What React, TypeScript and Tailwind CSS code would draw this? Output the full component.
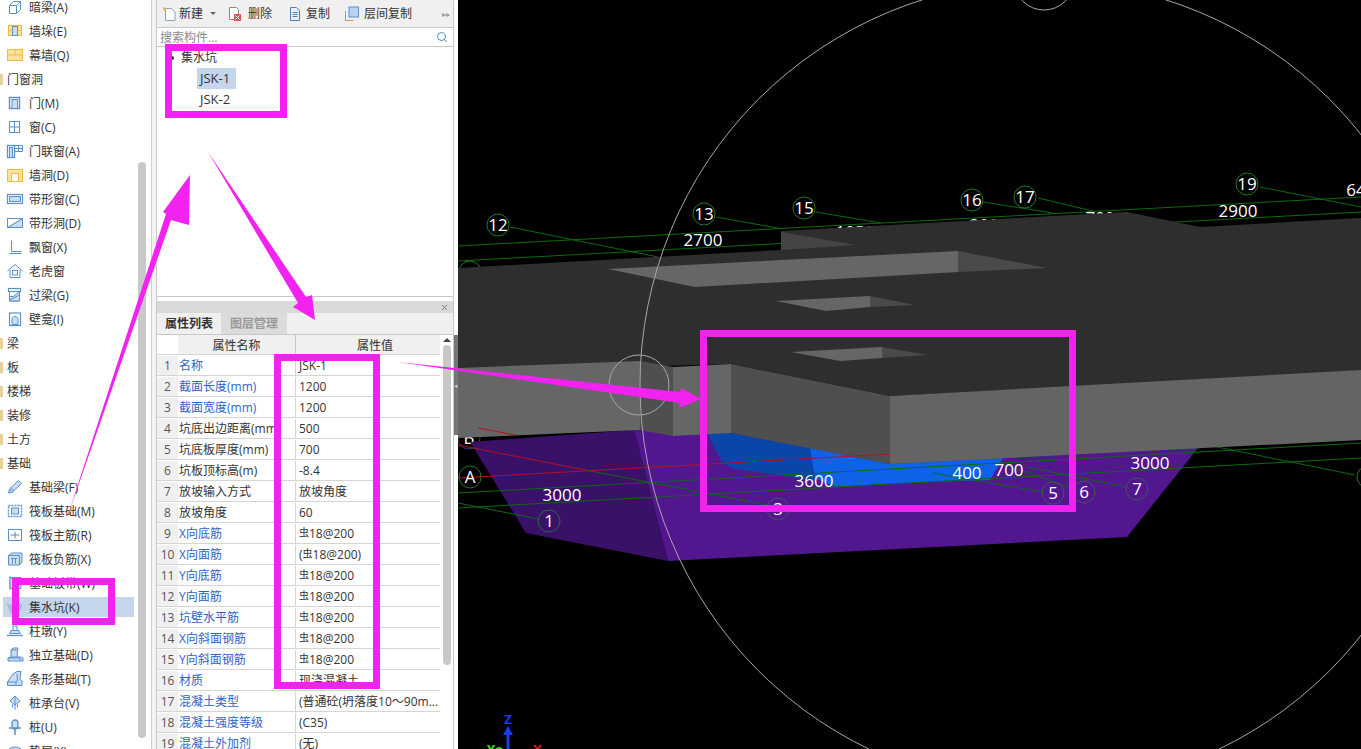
import type { ReactNode } from 'react'
import { Search, X } from 'lucide-react'

const BLUE = '#5b8fc7'
const LIGHT = '#c9def5'
const YEL = '#f5b942'
const YFILL = '#fde29b'

// 左侧构件树的小图标
const icons: Record<string, ReactNode> = {
  am: (
    <g fill="none" stroke={BLUE}>
      <path d="M3.5 7.5l4-4h7v8l-4 4h-7z" />
      <path d="M3.5 7.5h7v8M10.5 7.5l4-4" />
    </g>
  ),
  duo: (
    <g stroke={YEL}>
      <rect x="2.5" y="3.5" width="13" height="10" fill={YFILL} />
      <rect x="6.5" y="4.5" width="5" height="9" fill={LIGHT} stroke={BLUE} />
      <path d="M2.5 8.5h4M11.5 8.5h4" />
    </g>
  ),
  mq: (
    <g fill={YFILL} stroke={YEL}>
      <rect x="1.5" y="3.5" width="15" height="11" />
      <path d="M1.5 9h15M9 3.5V9" fill="none" />
    </g>
  ),
  men: (
    <g fill="none" stroke={BLUE}>
      <rect x="3.5" y="3.5" width="10" height="11" strokeWidth="1.4" />
      <rect x="6" y="5.5" width="5.5" height="9" fill={LIGHT} />
    </g>
  ),
  chuang: (
    <g fill="none" stroke={BLUE}>
      <rect x="3.5" y="3.5" width="10" height="11" />
      <path d="M3.5 9h10M8.5 3.5v11" />
    </g>
  ),
  mlc: (
    <g fill="none" stroke={BLUE}>
      <rect x="1.5" y="3.5" width="7" height="12" strokeWidth="1.3" />
      <rect x="3.5" y="5.5" width="3" height="10" fill={LIGHT} />
      <path d="M8.5 3.5h8v6h-8M12.5 3.5v6M8.5 6.5h8" />
    </g>
  ),
  qd: (
    <g stroke={YEL}>
      <rect x="1.5" y="3.5" width="15" height="12" fill={YFILL} />
      <rect x="5.5" y="7.5" width="7" height="8" fill="#fff" />
    </g>
  ),
  dxc: (
    <g stroke={BLUE}>
      <rect x="1.5" y="4.5" width="15" height="9" fill="none" strokeWidth="1.2" />
      <rect x="3.5" y="6.5" width="11" height="5" fill={LIGHT} />
    </g>
  ),
  dxd: (
    <g stroke={BLUE}>
      <path d="M1.5 4.5h15v9h-15z" fill={LIGHT} />
      <path d="M1.5 13.5l15-9" fill="none" />
      <path d="M1.5 4.5h15v0L1.5 13.5z" fill="#fff" />
    </g>
  ),
  pc: <path d="M5.5 2.5v11h10M3.5 15.5h12" fill="none" stroke={BLUE} />,
  lhc: (
    <g fill="none" stroke={BLUE}>
      <path d="M1.5 9L9 2.5 16.5 9M4 8v7.5h10V8" />
      <rect x="6.5" y="8.5" width="5" height="4.5" />
    </g>
  ),
  gl: (
    <g stroke={BLUE}>
      <rect x="3.5" y="5.5" width="10" height="9.5" fill={LIGHT} />
      <path d="M3.5 14l10-5v6h-10z" fill={LIGHT} />
      <path d="M3.5 10.5l4 0 6-5h-10z" fill="#fff" />
      <rect x="2.5" y="2.5" width="12" height="3" fill="#fff" strokeWidth="1.2" />
    </g>
  ),
  bk: (
    <g stroke={BLUE} fill="none">
      <rect x="3.5" y="3" width="11" height="12.5" strokeWidth="1.2" />
      <path d="M6 14.5V8.5q3-4.5 6 0v6z" fill={LIGHT} />
    </g>
  ),
  jcl: (
    <g stroke={BLUE} fill={LIGHT}>
      <path d="M2.5 15l1-4 9-8.5 3 3-9 8.5z" />
      <path d="M3.5 11l3 3.5M5 9.5l3 3.5" fill="none" />
    </g>
  ),
  fb: (
    <g fill="none" stroke={BLUE}>
      <rect x="2.5" y="3.5" width="13" height="11" strokeWidth="1.4" strokeDasharray="2 1" />
      <rect x="5.5" y="6" width="7" height="6" fill={LIGHT} />
    </g>
  ),
  fbz: (
    <g fill="none" stroke={BLUE}>
      <rect x="2.5" y="3.5" width="13" height="11" />
      <path d="M4.5 9h9M9 5.5v7" />
    </g>
  ),
  fbf: (
    <g fill="none" stroke={BLUE}>
      <path d="M2.5 5.5l3-2.5h10.500v9l-2.500 3h-11z" fill={LIGHT} />
      <path d="M2.500 5.500h11v9.500M5 8.500h6M6.500 8.500v5M9.500 8.500v5" />
    </g>
  ),
  jcbd: (
    <g fill="none" stroke={BLUE}>
      <path d="M4 2.500v13" strokeDasharray="2 1" strokeWidth="1.400" />
      <path d="M4 3.500h11v11H4z" fill={LIGHT} />
    </g>
  ),
  jsk: (
    <g fill="none" stroke="#8fa5bd">
      <path d="M1.500 6l3.500 8h2L4 6M16 6l-3.500 8h-2L14 6" />
      <path d="M9 3v7M6.500 8L9 11l2.500-3" />
    </g>
  ),
  zd: (
    <g fill="none" stroke={BLUE}>
      <rect x="7" y="4" width="4" height="4.500" />
      <path d="M5 8.500h8l1.500 3h-11z" fill={LIGHT} />
      <path d="M1 13.500h16" strokeWidth="1.300" />
    </g>
  ),
  dl: (
    <g fill="none" stroke={BLUE}>
      <path d="M2 15v-3l3-1V4l2-2h5l-1 9h4l2 1v3z" fill={LIGHT} />
      <path d="M5 4h6M2 12h12v3M5 11h6" />
    </g>
  ),
  tx: (
    <g fill="none" stroke={BLUE}>
      <path d="M1.500 15.500V12L7 4l4-2.500h4l-1 7 2 3v4z" fill={LIGHT} />
      <path d="M1.500 12H10l1.500-2L11 4M10 12v3.500" />
    </g>
  ),
  czt: (
    <g fill="none" stroke={BLUE}>
      <path d="M9 2l5 5-5 4-5-4z" fill={LIGHT} />
      <path d="M9 2v14M6.500 10.500v3M11.500 10.500v3" />
    </g>
  ),
  z: (
    <g stroke={BLUE} fill={LIGHT}>
      <rect x="6" y="2" width="6" height="9" rx="3" strokeWidth="1.300" />
      <path d="M3 10h12M9 11v6" fill="none" strokeWidth="1.500" />
    </g>
  ),
  dc: <ellipse cx="9" cy="10" rx="7.500" ry="5" fill={LIGHT} stroke={BLUE} />,
}

type TreeRow = { label: string; icon?: string; selected?: boolean }

const treeRows: TreeRow[] = [
  { label: '暗梁(A)', icon: 'am' },
  { label: '墙垛(E)', icon: 'duo' },
  { label: '幕墙(Q)', icon: 'mq' },
  { label: '门窗洞' },
  { label: '门(M)', icon: 'men' },
  { label: '窗(C)', icon: 'chuang' },
  { label: '门联窗(A)', icon: 'mlc' },
  { label: '墙洞(D)', icon: 'qd' },
  { label: '带形窗(C)', icon: 'dxc' },
  { label: '带形洞(D)', icon: 'dxd' },
  { label: '飘窗(X)', icon: 'pc' },
  { label: '老虎窗', icon: 'lhc' },
  { label: '过梁(G)', icon: 'gl' },
  { label: '壁龛(I)', icon: 'bk' },
  { label: '梁' },
  { label: '板' },
  { label: '楼梯' },
  { label: '装修' },
  { label: '土方' },
  { label: '基础' },
  { label: '基础梁(F)', icon: 'jcl' },
  { label: '筏板基础(M)', icon: 'fb' },
  { label: '筏板主筋(R)', icon: 'fbz' },
  { label: '筏板负筋(X)', icon: 'fbf' },
  { label: '基础板带(W)', icon: 'jcbd' },
  { label: '集水坑(K)', icon: 'jsk', selected: true },
  { label: '柱墩(Y)', icon: 'zd' },
  { label: '独立基础(D)', icon: 'dl' },
  { label: '条形基础(T)', icon: 'tx' },
  { label: '桩承台(V)', icon: 'czt' },
  { label: '桩(U)', icon: 'z' },
  { label: '垫层(X)', icon: 'dc' },
]

const REBAR = '虫18@200'

const props: { name: string; value: string; blue?: boolean }[] = [
  { name: '名称', value: 'JSK-1', blue: true },
  { name: '截面长度(mm)', value: '1200', blue: true },
  { name: '截面宽度(mm)', value: '1200', blue: true },
  { name: '坑底出边距离(mm)', value: '500' },
  { name: '坑底板厚度(mm)', value: '700' },
  { name: '坑板顶标高(m)', value: '-8.4' },
  { name: '放坡输入方式', value: '放坡角度' },
  { name: '放坡角度', value: '60' },
  { name: 'X向底筋', value: REBAR, blue: true },
  { name: 'X向面筋', value: `(${REBAR})`, blue: true },
  { name: 'Y向底筋', value: REBAR, blue: true },
  { name: 'Y向面筋', value: REBAR, blue: true },
  { name: '坑壁水平筋', value: REBAR, blue: true },
  { name: 'X向斜面钢筋', value: REBAR, blue: true },
  { name: 'Y向斜面钢筋', value: REBAR, blue: true },
  { name: '材质', value: '现浇混凝土', blue: true },
  { name: '混凝土类型', value: '(普通砼(坍落度10～90m...', blue: true },
  { name: '混凝土强度等级', value: '(C35)', blue: true },
  { name: '混凝土外加剂', value: '(无)', blue: true },
]

function RebarValue({ value }: { value: string }) {
  if (!value.includes('虫')) return <>{value}</>
  const [before, after] = value.split('虫')
  return (
    <>
      {before}
      <span className="text-[10px] align-[2px]">虫</span>
      {after}
    </>
  )
}

function Sidebar() {
  return (
    <div className="flex w-[152px] shrink-0 border-r border-[#cfcfcf] bg-white">
      <div className="w-[138px] shrink-0 -mt-[5px]">
        {treeRows.map((row) => (
          <div key={row.label} className="flex h-6 items-center">
            {row.icon ? (
              <div
                className={`ml-[3px] flex h-5 w-[131px] items-center ${row.selected ? 'bg-[#c5d6ec]' : ''}`}
              >
                <svg viewBox="0 0 18 18" className="ml-[3px] h-[18px] w-[18px] shrink-0">
                  {icons[row.icon]}
                </svg>
                <span className="ml-[5px] pt-[2px] text-[12px] text-[#333]">{row.label}</span>
              </div>
            ) : (
              <>
                <div className="h-[11px] w-[3px] bg-[#e9cf98]" />
                <span className="ml-1 pt-[2px] text-[12px] text-[#333]">{row.label}</span>
              </>
            )}
          </div>
        ))}
      </div>
      <div className="w-2 shrink-0">
        <div className="mt-[162px] h-[576px] rounded bg-[#c8c8c8]" />
      </div>
    </div>
  )
}

function Toolbar() {
  return (
    <div className="flex h-7 shrink-0 items-center border-b border-[#c8c8c8] bg-[#f0f0f0] text-[12px] text-[#333]">
      <svg viewBox="0 0 16 16" className="ml-[5px] h-4 w-4 shrink-0">
        <path d="M3.500 2.500h6l3.500 3.500v8.500h-9.500z" fill="#fff" stroke="#8ca3ba" />
        <path d="M1 1l3 1-1 3-2-1z" fill="#f3b94a" />
      </svg>
      <span className="ml-[1px]">新建</span>
      <span className="ml-[7px] h-0 w-0 border-x-[3px] border-t-[3px] border-x-transparent border-t-[#666]" />
      <svg viewBox="0 0 16 16" className="ml-[11px] h-4 w-4 shrink-0">
        <path d="M2.500 1.500h7l2 2v10h-9z" fill="#fff" stroke="#8a8a8a" />
        <rect x="7" y="8" width="7" height="7" fill="#d9534f" />
        <path d="M8.500 9.500l4 4M12.500 9.500l-4 4" stroke="#fff" />
      </svg>
      <span className="ml-[5px]">删除</span>
      <svg viewBox="0 0 16 16" className="ml-[15px] h-4 w-4 shrink-0">
        <path d="M3.500 1.500h6l3 3v10h-9z" fill="#e8f1fb" stroke="#4f7fb3" />
        <path d="M5.500 6.500h5M5.500 8.500h5M5.500 10.500h5" stroke="#4f7fb3" />
      </svg>
      <span className="ml-[3px]">复制</span>
      <svg viewBox="0 0 16 16" className="ml-[14px] h-4 w-4 shrink-0">
        <path d="M1.500 5v9.500h8" fill="none" stroke="#e08a4a" />
        <rect x="5" y="1" width="9.500" height="10" fill="#b9d3ef" stroke="#5b8fc7" />
      </svg>
      <span className="ml-[4px]">层间复制</span>
      <span className="ml-auto mr-[3px] text-[8px] text-[#999]">▸▸</span>
    </div>
  )
}

function ComponentTree() {
  return (
    <div className="flex h-[269px] shrink-0 flex-col border-b border-[#c8c8c8] bg-white text-[12px] text-[#333]">
      <div className="flex h-[19px] shrink-0 items-center justify-between border-b border-[#c8c8c8] pl-[3px] pr-[5px]">
        <span className="pt-[2px] text-[#8a8a8a]">搜索构件...</span>
        <Search size={12} color="#4f8fc7" strokeWidth={2} />
      </div>
      <div className="flex h-[21px] items-center">
        <span className="ml-[13px] h-1 w-1 rounded-full bg-[#333]" />
        <span className="ml-[7px]">集水坑</span>
      </div>
      <div className="ml-10 flex h-[21px] w-[39px] items-center bg-[#c5d6ec] pl-[3px] text-[13px]">JSK-1</div>
      <div className="ml-10 flex h-[21px] w-[39px] items-center pl-[3px] text-[13px]">JSK-2</div>
    </div>
  )
}

function PropertyPanel() {
  return (
    <div className="flex min-h-0 flex-1 flex-col text-[12px] text-[#333]">
      <div className="h-1 shrink-0 bg-white" />
      <div className="flex h-3 shrink-0 items-center justify-end bg-[#d9d9d9] pr-[4px]">
        <X size={9} color="#777" strokeWidth={2.5} />
      </div>
      <div className="flex h-[22px] shrink-0 border-b border-[#c8c8c8] bg-[#f0f0f0]">
        <div className="flex w-16 items-center justify-center font-bold">属性列表</div>
        <div className="flex w-[66px] items-center justify-center bg-[#dcdcdc] font-bold text-[#999]">图层管理</div>
      </div>
      <div className="flex min-h-0 flex-1">
        <div className="w-[283px] shrink-0">
          <div className="flex h-5 border-b border-[#d5d5d5]">
            <div className="w-[21px] shrink-0 bg-white" />
            <div className="flex w-[117px] shrink-0 items-center justify-center bg-[#f0f0f0] pt-[2px]">属性名称</div>
            <div className="flex flex-1 items-center justify-center border-l border-[#c8c8c8] bg-[#f0f0f0] pl-[14px] pt-[2px]">
              属性值
            </div>
          </div>
          {props.map((p, i) => (
            <div key={p.name} className="flex h-[21px] border-b border-[#d5d5d5] pt-[1px]">
              <div className="flex w-[21px] shrink-0 items-center justify-center bg-[#f0f0f0] text-[#555]">{i + 1}</div>
              <div
                className={`flex w-[117px] shrink-0 items-center overflow-hidden whitespace-nowrap pl-[1px] ${p.blue ? 'text-[#2f62c8]' : ''}`}
              >
                {p.name}
              </div>
              <div className="flex flex-1 items-center overflow-hidden whitespace-nowrap border-l border-[#d5d5d5] pl-[3px]">
                <span>
                  <RebarValue value={p.value} />
                </span>
              </div>
            </div>
          ))}
        </div>
        <div className="flex w-[13px] shrink-0 flex-col items-center bg-white">
          <span className="mt-[3px] h-0 w-0 border-x-[4px] border-b-[4px] border-x-transparent border-b-[#444]" />
          <div className="mt-[3px] h-[320px] w-2 rounded bg-[#c8c8c8]" />
        </div>
      </div>
    </div>
  )
}

function Hub({ x, y, label, stroke }: { x: number; y: number; label: string; stroke: string }) {
  return (
    <g>
      <circle cx={x} cy={y} r="11" fill="none" stroke={stroke} />
      <text
        x={x}
        y={y + 6}
        textAnchor="middle"
        className="fill-white font-['Open_Sans',sans-serif] text-[17px]"
      >
        {label}
      </text>
    </g>
  )
}

function Dim({ x, y, label }: { x: number; y: number; label: string }) {
  return (
    <text x={x} y={y} textAnchor="middle" className="fill-white font-['Open_Sans',sans-serif] text-[17px]">
      {label}
    </text>
  )
}

// 三维视图，坐标直接用整页像素
function Scene() {
  const G = '#0b6a12'
  return (
    <svg viewBox="458 0 903 749" className="h-full w-full bg-black">
      <g stroke={G} fill="none">
        <path d="M458 246L1361 197M458 261L1361 212" />
        <path d="M510 227L658 257M716 217L783 229M816 212L881 223M983 202L1053 213M1038 198L1097 212M1260 187L1361 207" />
      </g>
      <Hub x={498} y={225} label="12" stroke="#1c7a22" />
      <Hub x={704} y={214} label="13" stroke="#1c7a22" />
      <Hub x={804} y={208} label="15" stroke="#1c7a22" />
      <Hub x={972} y={200} label="16" stroke="#1c7a22" />
      <Hub x={1025} y={197} label="17" stroke="#1c7a22" />
      <Hub x={1247} y={184} label="19" stroke="#1c7a22" />
      <Dim x={1356} y={196} label="64" />
      <Dim x={703} y={246} label="2700" />
      <Dim x={855} y={238} label="1050" />
      <Dim x={989} y={231} label="2000" />
      <Dim x={1100} y={224} label="700" />
      <Dim x={1238} y={217} label="2900" />
      <circle cx={470} cy={272} r="11" fill="none" stroke="#1c7a22" />
      <Hub x={469} y={438} label="B" stroke="#30407a" />

      {/* 板顶 */}
      <polygon
        points="458,268 781,250 781,231 1127,212 1200,227 1361,218 1361,372 890,396 731,364 458,372"
        fill="#2e2e2e"
      />
      <polygon points="781,232 856,245 781,250" fill="#444" />
      <polygon points="608,269 958,251 958,272 695,287" fill="#666" />
      <polygon points="958,251 1047,268 958,272" fill="#4a4a4a" />
      <polygon points="776,301 870,296 870,307 826,311" fill="#666" />
      <polygon points="870,296 915,305 870,307" fill="#4a4a4a" />
      <polygon points="791,352 882,347 882,358 840,361" fill="#666" />
      <polygon points="882,347 928,355 882,358" fill="#4a4a4a" />

      {/* 底部放坡 */}
      <polygon points="470,442 634,430 668,561 526,533" fill="#3a1168" />
      <polygon points="634,430 1198,448 1127,537 668,561" fill="#52168f" />
      <polygon points="707,433 731,433 810,448 818,480 796,478 731,468 721,460" fill="#0a46a8" />
      <polygon points="810,448 890,464 1003,458 990,480 900,483 835,487 815,478" fill="#0e62e8" />

      {/* 侧面 */}
      <polygon points="458,368 640,361 640,430 458,438" fill="#666" />
      <polygon points="640,361 673,367 673,436 640,430" fill="#4f4f4f" />
      <polygon points="673,367 731,364 731,433 673,436" fill="#666" />
      <polygon points="731,364 890,396 890,464 731,433" fill="#4f4f4f" />
      <polygon points="890,396 1361,370 1361,440 890,464" fill="#646464" />

      <g fill="none">
        <path d="M458 478L890 454M458 445L585 470M478 428L515 435" stroke="#b5121e" />
        <path
          d="M458 493L1361 443M458 508L1361 458M585 470L768 505M458 503L538 519M933 473L1043 492M1000 463L1077 490M1027 467L1127 487M1217 447L1355 475"
          stroke={G}
        />
      </g>
      <Hub x={470} y={477} label="A" stroke="#1c7a22" />
      <Hub x={549} y={521} label="1" stroke="#2a6a40" />
      <Hub x={778} y={509} label="3" stroke="#3b5a55" />
      <Hub x={1053} y={493} label="5" stroke="#3b5a55" />
      <Hub x={1084} y={492} label="6" stroke="#3b5a55" />
      <Hub x={1137} y={489} label="7" stroke="#3b5a55" />
      <circle cx={1368} cy={477} r="11" fill="none" stroke="#1c7a22" />
      <Dim x={562} y={501} label="3000" />
      <Dim x={814} y={487} label="3600" />
      <Dim x={967} y={479} label="400" />
      <Dim x={1009} y={476} label="700" />
      <Dim x={1150} y={469} label="3000" />

      <g fill="none" stroke="#a8a8a8">
        <circle cx={1044} cy={385} r="404" />
        <circle cx={639} cy={385} r="30" />
        <circle cx={1044} cy={-20} r="30" />
      </g>

      {/* 坐标轴 */}
      <path d="M508 749V732" stroke="#1a3cf0" strokeWidth="3" />
      <path d="M503 735l5-9 5 9z" fill="#1a3cf0" />
      <text x={508} y={724} textAnchor="middle" className="fill-[#1a3cf0] font-['Open_Sans',sans-serif] text-[13px] font-bold">
        Z
      </text>
      <text x={487} y={754} className="fill-[#3ce01a] font-['Open_Sans',sans-serif] text-[13px] font-bold">
        Yo
      </text>
      <text x={533} y={754} className="fill-[#e01a1a] font-['Open_Sans',sans-serif] text-[13px] font-bold">
        X
      </text>
    </svg>
  )
}

// 覆盖整页的洋红色批注
function Annotations() {
  const M = '#f222f0'
  return (
    <svg viewBox="0 0 1361 749" className="pointer-events-none absolute inset-0 h-full w-full">
      <g fill="none" stroke={M} strokeWidth="7">
        <rect x="168.500" y="47.500" width="115" height="67" />
        <rect x="277.500" y="357.500" width="99" height="328" />
        <rect x="703.500" y="333.500" width="369" height="175" />
        <rect x="15.500" y="581.500" width="96" height="40" />
      </g>
      <g fill={M}>
        <polygon points="67,518 171,220 189,225 190,175 163,212 166,214" />
        <polygon points="208,152 306,297 312,295 315,320 293,307 298,303" />
        <polygon points="398,362 680,392 681,388 701,399 679,408 680,403" />
      </g>
    </svg>
  )
}

export default function App() {
  return (
    <div className="relative flex h-screen w-full overflow-hidden bg-white font-['Open_Sans','Noto_Sans_CJK_SC',sans-serif]">
      <Sidebar />
      <div className="w-1 shrink-0 bg-[#f3f3f3]" />
      <div className="flex w-[298px] shrink-0 flex-col border-x border-[#c8c8c8] bg-white">
        <Toolbar />
        <ComponentTree />
        <PropertyPanel />
      </div>
      <div className="flex w-[4px] shrink-0 flex-col bg-white">
        <div className="mt-[335px] flex h-[100px] items-center bg-[#6f767c] text-[7px] leading-none text-[#ccc]">◂</div>
      </div>
      <div className="min-w-0 flex-1">
        <Scene />
      </div>
      <Annotations />
    </div>
  )
}
